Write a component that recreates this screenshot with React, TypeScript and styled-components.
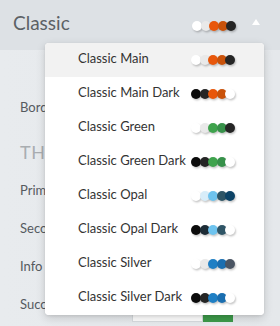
import React from "react";
import styled, { createGlobalStyle } from "styled-components";

const Global = createGlobalStyle`
  html, body { margin: 0; padding: 0; }
  body {
    width: 280px;
    height: 326px;
    overflow: hidden;
    background: #e7eaed;
    font-family: Lato, "Open Sans", sans-serif;
  }
`;

const Page = styled.div`
  position: relative;
  width: 280px;
  height: 326px;
  overflow: hidden;
  background: linear-gradient(90deg, #e8ebee 0%, #e5e8eb 100%);
`;

const Header = styled.div`
  height: 50px;
  background: #dde1e5;
  display: flex;
  align-items: center;
  padding: 0 20px 0 13px;
  box-sizing: border-box;
`;

const Title = styled.div`
  flex: 1;
  font-size: 19px;
  color: #5c6166;
  margin-top: -6px;
`;

const HeaderDots = styled.div`
  margin-top: 2px;
`;

const Caret = styled.div`
  width: 0;
  height: 0;
  border-left: 4.5px solid transparent;
  border-right: 4.5px solid transparent;
  border-bottom: 6px solid #ffffff;
  margin-left: 16px;
  margin-top: -6px;
`;

const Body = styled.div`
  padding: 38px 0 0 20px;
`;

const Row = styled.div`
  height: 38px;
  display: flex;
  align-items: center;
`;

const Label = styled.div`
  width: 112px;
  font-size: 13px;
  color: #555a5f;
`;

const SectionHead = styled.div`
  height: 38px;
  margin-top: 7px;
  display: flex;
  align-items: center;
  font-size: 18px;
  color: #a9adb1;
  letter-spacing: 0.5px;
`;

const Control = styled.div`
  display: flex;
  height: 28px;
  align-self: flex-end;
  margin-bottom: 1px;
`;

const Input = styled.div`
  width: 71px;
  background: #ffffff;
  border: 1px solid #d8dcdf;
  box-sizing: border-box;
`;

const Swatch = styled.div<{ $c: string }>`
  width: 30px;
  background: ${(p) => p.$c};
`;

const Menu = styled.div`
  position: absolute;
  top: 43px;
  left: 45px;
  width: 219px;
  background: #ffffff;
  border-radius: 4px;
  box-shadow: 0 3px 10px rgba(0, 0, 0, 0.16), 0 1px 3px rgba(0, 0, 0, 0.08);
  overflow: hidden;
`;

const Item = styled.div<{ $active?: boolean }>`
  height: 34px;
  display: flex;
  align-items: center;
  padding: 0 29px 0 33px;
  background: ${(p) => (p.$active ? "#f2f2f2" : "#ffffff")};
`;

const ItemText = styled.div`
  flex: 1;
  white-space: nowrap;
  font-size: 13px;
  color: #333333;
  margin-top: -4px;
`;

const Dots = styled.div`
  display: flex;
  align-items: center;
  flex-shrink: 0;
`;

const Dot = styled.span<{ $c: string }>`
  flex-shrink: 0;
  width: 10px;
  height: 10px;
  border-radius: 50%;
  background: ${(p) => p.$c};
  box-shadow: 1px 1.5px 2px rgba(0, 0, 0, 0.22);
  & + & {
    margin-left: -1.6px;
  }
`;

const W = "#ffffff";
const LG = "#e9e9e9";
const BK = "#0b0b0b";
const DK = "#252525";
const OR = "#e8570b";
const OR2 = "#c9520a";
const GR = "#3fa34d";
const GR2 = "#37914a";
const SK = "#6ec3ee";
const LB = "#d8edf9";
const SL = "#2f5566";
const NV = "#0d4366";
const BL = "#1f7fc4";
const BL2 = "#1a6eb0";
const GY = "#4b5563";

const themes: { name: string; colors: string[] }[] = [
  { name: "Classic Main", colors: [W, LG, OR, OR2, DK] },
  { name: "Classic Main Dark", colors: [BK, DK, OR, OR2, W] },
  { name: "Classic Green", colors: [W, LG, GR, GR2, DK] },
  { name: "Classic Green Dark", colors: [BK, DK, GR, GR2, W] },
  { name: "Classic Opal", colors: [W, LB, SK, SL, NV] },
  { name: "Classic Opal Dark", colors: [BK, "#1d2c36", SK, SL, W] },
  { name: "Classic Silver", colors: [W, LG, BL, BL2, GY] },
  { name: "Classic Silver Dark", colors: [BK, DK, BL, BL2, W] },
];

const DotRow = ({ colors }: { colors: string[] }) => (
  <Dots>
    {colors.map((c, i) => (
      <Dot key={i} $c={c} />
    ))}
  </Dots>
);

export default function App() {
  return (
    <>
      <Global />
      <Page>
        <Header>
          <Title>Classic</Title>
          <HeaderDots>
            <DotRow colors={themes[0].colors} />
          </HeaderDots>
          <Caret />
        </Header>
        <Body>
          <Row>
            <Label>Border</Label>
          </Row>
          <SectionHead>THEME</SectionHead>
          <Row>
            <Label>Primary</Label>
          </Row>
          <Row>
            <Label>Secondary</Label>
          </Row>
          <Row>
            <Label>Info</Label>
          </Row>
          <Row>
            <Label>Success</Label>
            <Control>
              <Input />
              <Swatch $c="#3d9b4a" />
            </Control>
          </Row>
        </Body>
        <Menu>
          {themes.map((t, i) => (
            <Item key={t.name} $active={i === 0}>
              <ItemText>{t.name}</ItemText>
              <DotRow colors={t.colors} />
            </Item>
          ))}
        </Menu>
      </Page>
    </>
  );
}
